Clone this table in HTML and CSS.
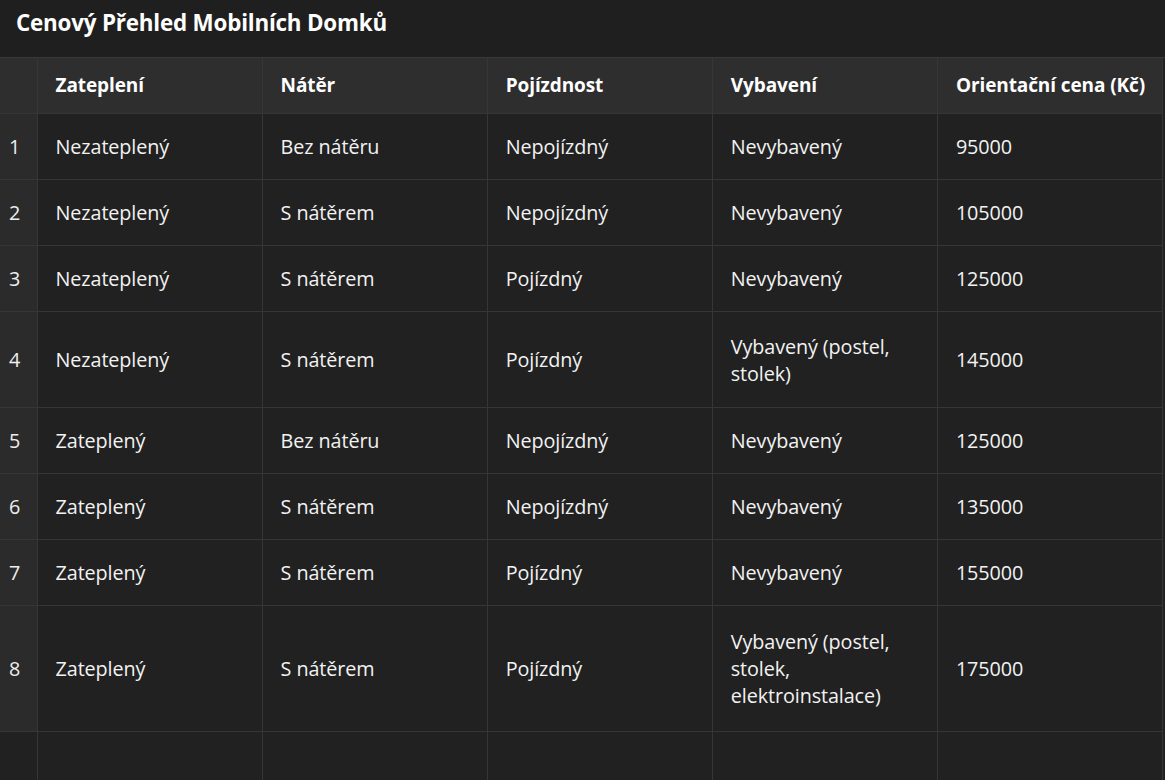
FILE: index.html
```html
<!DOCTYPE html>
<html lang="cs">
<head>
<meta charset="utf-8">
<title>Cenový Přehled Mobilních Domků</title>
<link rel="stylesheet" href="styles.css">
</head>
<body>
<div class="app">
  <div class="titlebar">Cenový Přehled Mobilních Domků</div>
  <div class="grid-wrap">
    <table class="grid">
      <colgroup>
        <col class="c-idx"><col class="c-col"><col class="c-col"><col class="c-col"><col class="c-col"><col class="c-col">
      </colgroup>
      <thead>
        <tr class="head">
          <th class="idx"></th>
          <th>Zateplení</th>
          <th>Nátěr</th>
          <th>Pojízdnost</th>
          <th>Vybavení</th>
          <th>Orientační cena (Kč)</th>
        </tr>
      </thead>
      <tbody>
        <tr><td class="idx">1</td><td>Nezateplený</td><td>Bez nátěru</td><td>Nepojízdný</td><td>Nevybavený</td><td>95000</td></tr>
        <tr><td class="idx">2</td><td>Nezateplený</td><td>S nátěrem</td><td>Nepojízdný</td><td>Nevybavený</td><td>105000</td></tr>
        <tr><td class="idx">3</td><td>Nezateplený</td><td>S nátěrem</td><td>Pojízdný</td><td>Nevybavený</td><td>125000</td></tr>
        <tr class="tall2"><td class="idx">4</td><td>Nezateplený</td><td>S nátěrem</td><td>Pojízdný</td><td>Vybavený (postel, stolek)</td><td>145000</td></tr>
        <tr><td class="idx">5</td><td>Zateplený</td><td>Bez nátěru</td><td>Nepojízdný</td><td>Nevybavený</td><td>125000</td></tr>
        <tr><td class="idx">6</td><td>Zateplený</td><td>S nátěrem</td><td>Nepojízdný</td><td>Nevybavený</td><td>135000</td></tr>
        <tr><td class="idx">7</td><td>Zateplený</td><td>S nátěrem</td><td>Pojízdný</td><td>Nevybavený</td><td>155000</td></tr>
        <tr class="tall3"><td class="idx">8</td><td>Zateplený</td><td>S nátěrem</td><td>Pojízdný</td><td>Vybavený (postel, stolek, elektroinstalace)</td><td>175000</td></tr>
        <tr class="empty"><td class="idx blank"></td><td></td><td></td><td></td><td></td><td></td></tr>
      </tbody>
    </table>
  </div>
</div>
</body>
</html>
```

FILE: styles.css
```css
html, body {
  margin: 0;
  padding: 0;
  background: #212121;
  height: 100%;
  overflow: hidden;
}

.app {
  font-family: "Open Sans", "Noto Sans", "Liberation Sans", sans-serif;
  color: #f2f2f2;
}

.titlebar {
  height: 58px;
  box-sizing: border-box;
  display: flex;
  align-items: center;
  padding: 0 0 12px 16px;
  background: #1f1f1f;
  font-size: 22.4px;
  font-weight: 700;
  color: #ffffff;
  border-bottom: 1px solid #383838;
  letter-spacing: -0.2px;
}

.grid-wrap {
  overflow: hidden;
}

.grid {
  border-collapse: collapse;
  table-layout: fixed;
  width: 1163px;
  font-size: 19.8px;
  letter-spacing: -0.1px;
}

.c-idx { width: 37px; }
.c-col { width: 225px; }

.grid th,
.grid td {
  border-right: 1px solid #363636;
  border-bottom: 1px solid #363636;
  padding: 0 18px;
  text-align: left;
  vertical-align: middle;
  line-height: 27px;
}

.grid th {
  background: #2e2e2e;
  font-weight: 700;
  font-size: 19px;
  color: #ffffff;
  height: 55px;
  white-space: nowrap;
  overflow: hidden;
}

.grid td {
  background: #212121;
  height: 65px;
}

.grid .idx {
  padding: 0 0 0 9px;
  background: #2b2b2b;
  color: #eeeeee;
}

.grid th.idx {
  background: #2e2e2e;
}

.grid tr.tall2 td { height: 95px; }
.grid tr.tall3 td { height: 125px; }

.grid tr.empty td {
  height: 60px;
  border-bottom: none;
  background: #212121;
}
```
